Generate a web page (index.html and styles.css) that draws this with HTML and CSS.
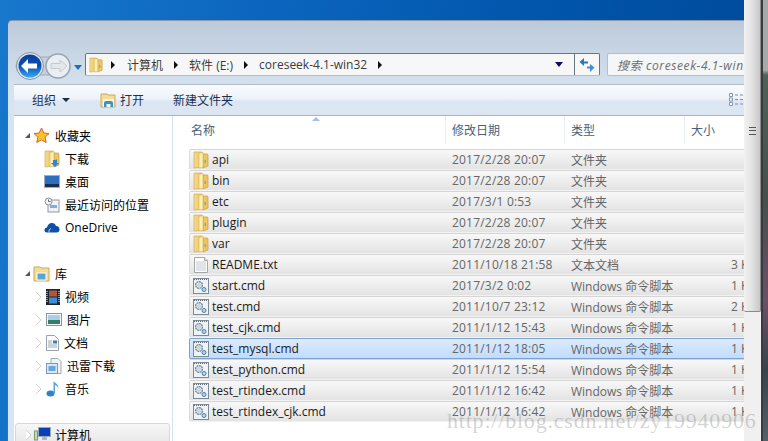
FILE: index.html
```html
<!DOCTYPE html>
<html lang="zh-CN">
<head>
    <meta charset="UTF-8">
    <title>coreseek-4.1-win32</title>
    <link rel="stylesheet" href="styles.css">
</head>
<body>
<svg class="defs" width="0" height="0">
    <defs>
        <linearGradient id="fold" x1="0" y1="0" x2="1" y2="0">
            <stop offset="0" stop-color="#f6dc8c"/>
            <stop offset="1" stop-color="#e8bf55"/>
        </linearGradient>
        <linearGradient id="orb" x1="0" y1="0" x2="0" y2="1">
            <stop offset="0" stop-color="#0d3f98"/>
            <stop offset="0.5" stop-color="#0a4fb4"/>
            <stop offset="1" stop-color="#39a8f2"/>
        </linearGradient>
        <symbol id="folder" viewBox="0 0 16 18">
            <path d="M1 1h8l1 1v14l-9 1z" fill="url(#fold)" stroke="#cfa95c" stroke-width=".7"/>
            <path d="M10 3h4.500l.5 1v11l-5 2z" fill="#eec660" stroke="#c49c4a" stroke-width=".7"/>
            <path d="M6 2.500l4-1v15l-4 .5z" fill="#fdf0b4" stroke="#d7b45c" stroke-width=".6"/>
            <rect x="11.500" y="9" width="1.500" height="3" fill="#8aa5b0"/>
        </symbol>
        <symbol id="txtfile" viewBox="0 0 16 16">
            <path d="M1.500.5h10l3 3v12h-13z" fill="#fdfdfd" stroke="#a6a6a6"/>
            <path d="M11.500.5v3h3" fill="#e8e8e8" stroke="#a6a6a6"/>
            <path d="M3 5h10M3 7h10M3 9h10M3 11h10M3 13h10" stroke="#c4ccd4"/>
        </symbol>
        <symbol id="cmdfile" viewBox="0 0 16 16">
            <rect x=".5" y=".5" width="15" height="15" fill="#eef3f7" stroke="#7d8a94"/>
            <path d="M1 1.500h14" stroke="#5f6a74" stroke-dasharray="1 1"/>
            <circle cx="6" cy="7" r="3.400" fill="#dfe8ee" stroke="#6f8494" stroke-width="1.300" stroke-dasharray="2 .6"/>
            <circle cx="6" cy="7" r="1.200" fill="#fff" stroke="#8fa0ac" stroke-width=".6"/>
            <circle cx="11" cy="11.500" r="2" fill="#b9d3ea" stroke="#4a7eb0"/>
        </symbol>
    </defs>
</svg>

<div class="desktop">
    <div class="window">
        <div class="nav">
            <div class="orbs">
                <svg width="62" height="30" viewBox="0 0 62 30">
                    <rect x="1" y="6" width="54" height="18" rx="9" fill="#c6d0dc" stroke="#9fabb8"/>
                    <circle cx="15" cy="15" r="13.500" fill="#dfe7ef" stroke="#8795a5"/>
                    <circle cx="15" cy="15" r="11.500" fill="url(#orb)"/>
                    <path d="M6 15l7-7v4.500h9v5h-9v4.500z" fill="#fff"/>
                    <circle cx="43" cy="15" r="12" fill="#e9eef3" stroke="#98a3af" stroke-width="1.500"/>
                    <path d="M52 15l-7-6v3.500h-9v5h9v3.500z" fill="#e4e8ec" stroke="#c2c9d0"/>
                </svg>
                <span class="caret-blue"></span>
            </div>
            <div class="address">
                <svg class="addr-icon" width="14" height="18"><use href="#folder"/></svg>
                <span class="crumb-arrow first"></span>
                <span>计算机</span>
                <span class="crumb-arrow"></span>
                <span>软件 (E:)</span>
                <span class="crumb-arrow"></span>
                <span>coreseek-4.1-win32</span>
                <span class="crumb-arrow"></span>
                <span class="addr-drop"></span>
                <span class="refresh">
                    <svg width="16" height="16" viewBox="0 0 16 16">
                        <path d="M5 1v3.500h4v2H5V9L.5 5z" fill="#2f74c0"/>
                        <path d="M11 15v-3.500H8v-2h3V7l4.500 3.500z" fill="#3f8fd8"/>
                    </svg>
                </span>
            </div>
            <div class="search">搜索 coreseek-4.1-win32</div>
        </div>

        <div class="toolbar">
            <span class="tool organize">组织<i class="caret-dark"></i></span>
            <span class="tool open">
                <svg width="17" height="16" viewBox="0 0 17 16">
                    <path d="M1 2h6l1 1h7v12H1z" fill="#f3dc95" stroke="#c9a95c"/>
                    <path d="M3 7h11v8H3z" fill="#fdf6d8"/>
                    <path d="M4 15V11q0-2 2-2h5q2 0 2 2v4h-2.500v-3h-4v3z" fill="#3b8fd0"/>
                </svg>
                打开
            </span>
            <span class="tool">新建文件夹</span>
            <svg class="view-icon" width="15" height="13" viewBox="0 0 15 13">
                <path d="M.5.500h3v3h-3zM.5 5h3v3h-3zM.5 9.500h3v3h-3z" fill="#fff" stroke="#8494a6"/>
                <path d="M6 2h3M11 2h3M6 6.500h3M11 6.500h3M6 11h3M11 11h3" stroke="#7d8da0"/>
            </svg>
        </div>

        <div class="panes">
            <aside class="sidebar">
                <div class="side-row top"><i class="arrow-open"></i>
                    <svg class="ico-big" width="17" height="17" viewBox="0 0 17 17">
                        <path d="M8.500 1l2.300 5 5.200.6-3.900 3.500 1.100 5.400-4.700-2.700-4.700 2.700 1.100-5.400L1 6.600 6.200 6z" fill="#fbc02d" stroke="#d9641e"/>
                    </svg>
                    收藏夹</div>
                <div class="side-row sub">
                    <svg width="16" height="18" viewBox="0 0 16 18"><use href="#folder"/><path d="M9 10h4v3h2l-4 4-4-4h2z" fill="#2a86d8"/></svg>
                    下载</div>
                <div class="side-row sub">
                    <svg width="16" height="13" viewBox="0 0 16 13"><rect x=".5" y=".5" width="15" height="12" fill="#2a6fc0" stroke="#9fb0c0"/><rect x="1" y="9" width="14" height="3" fill="#1c2f4a"/></svg>
                    桌面</div>
                <div class="side-row sub">
                    <svg width="16" height="16" viewBox="0 0 16 16"><rect x="4" y="3" width="11" height="12" fill="#f0f3f5" stroke="#8e9aa5"/><rect x="6" y="8" width="7" height="3" fill="#7fb0d8"/><circle cx="4.500" cy="4.500" r="3.500" fill="#f4f4f4" stroke="#868f98"/><path d="M4.500 2.500v2h2" fill="none" stroke="#667"/></svg>
                    最近访问的位置</div>
                <div class="side-row sub">
                    <svg width="16" height="11" viewBox="0 0 16 11"><path d="M3 10.500Q.5 10.500.5 8T3 5.500Q4 1 8 1q3 0 4 3 3.500 0 3.500 3.500 0 3-3 3z" fill="#0f4fa8"/><path d="M5 10.500q-1-3 2-4" fill="none" stroke="#fff" stroke-width=".7"/></svg>
                    OneDrive</div>

                <div class="side-row group"><i class="arrow-open"></i>
                    <svg class="ico-big" width="17" height="17" viewBox="0 0 17 17"><path d="M1 2h6l1 1h8v13H1z" fill="#f3dc95" stroke="#c9a95c"/><rect x="4" y="8" width="9" height="7" fill="#5aa5d8" stroke="#fff"/></svg>
                    库</div>
                <div class="side-row lib"><i class="arrow-closed"></i>
                    <svg width="14" height="16" viewBox="0 0 14 16"><rect width="14" height="16" fill="#20252c"/><rect x="3" y="1.500" width="8" height="6" fill="#b0563c"/><rect x="3" y="8.500" width="8" height="6" fill="#3a8fd8"/><path d="M1 2v12M13 2v12" stroke="#ddd" stroke-dasharray="1 1" stroke-width="1.200"/></svg>
                    视频</div>
                <div class="side-row lib"><i class="arrow-closed"></i>
                    <svg width="16" height="13" viewBox="0 0 16 13"><rect x=".5" y=".5" width="15" height="12" fill="#f3f5f6" stroke="#8a959f"/><rect x="2" y="2" width="12" height="5" fill="#a9cfe8"/><rect x="2" y="7" width="12" height="4" fill="#357f62"/></svg>
                    图片</div>
                <div class="side-row lib"><i class="arrow-closed"></i>
                    <svg width="13" height="16" viewBox="0 0 13 16"><path d="M.5.500h8l4 4v11H.5z" fill="#fbfbfb" stroke="#97a3ad"/><path d="M2 6h4M2 8h4M2 10h9M2 12h9" stroke="#9aa8b6"/><rect x="7" y="5.500" width="4" height="3" fill="#3f79b0"/></svg>
                    文档</div>
                <div class="side-row lib"><i class="arrow-closed"></i>
                    <svg width="16" height="16" viewBox="0 0 16 16"><path d="M5 .5h7l3 3v12H5z" fill="#f1f4f7" stroke="#9daab6"/><rect x=".5" y="5.500" width="11" height="10" fill="#dbe8f3" stroke="#7c9ab8"/><rect x="2.500" y="8" width="7" height="5" fill="#65a8e0"/></svg>
                    迅雷下载</div>
                <div class="side-row lib"><i class="arrow-closed"></i>
                    <svg width="14" height="16" viewBox="0 0 14 16"><ellipse cx="4.500" cy="12.500" rx="4" ry="3" fill="#2f83cc"/><path d="M7.500 12V.5q5 2.500 5 7-1-3-3.500-3.500V12z" fill="#58a5de"/></svg>
                    音乐</div>

                <div class="side-row computer"><i class="arrow-closed"></i>
                    <svg width="17" height="16" viewBox="0 0 17 16"><rect x=".5" y="4" width="3" height="9" fill="#c5d0d8" stroke="#79a060"/><rect x="4.500" y=".5" width="12" height="9" fill="#0b3fb5" stroke="#9aa8b4"/><rect x="8" y="10" width="5" height="3" fill="#aeb8c0"/></svg>
                    计算机</div>
            </aside>

            <main class="files">
                <div class="sort-mark"></div>
                <div class="headers">
                    <span class="col-name">名称</span>
                    <span class="col-date">修改日期</span>
                    <span class="col-type">类型</span>
                    <span class="col-size">大小</span>
                </div>

                <div class="row"><svg width="16" height="18"><use href="#folder"/></svg><span class="col-name">api</span><span class="col-date">2017/2/28 20:07</span><span class="col-type">文件夹</span><span class="col-size"></span></div>
                <div class="row"><svg width="16" height="18"><use href="#folder"/></svg><span class="col-name">bin</span><span class="col-date">2017/2/28 20:07</span><span class="col-type">文件夹</span><span class="col-size"></span></div>
                <div class="row"><svg width="16" height="18"><use href="#folder"/></svg><span class="col-name">etc</span><span class="col-date">2017/3/1 0:53</span><span class="col-type">文件夹</span><span class="col-size"></span></div>
                <div class="row"><svg width="16" height="18"><use href="#folder"/></svg><span class="col-name">plugin</span><span class="col-date">2017/2/28 20:07</span><span class="col-type">文件夹</span><span class="col-size"></span></div>
                <div class="row"><svg width="16" height="18"><use href="#folder"/></svg><span class="col-name">var</span><span class="col-date">2017/2/28 20:07</span><span class="col-type">文件夹</span><span class="col-size"></span></div>
                <div class="row"><svg width="16" height="16"><use href="#txtfile"/></svg><span class="col-name">README.txt</span><span class="col-date">2011/10/18 21:58</span><span class="col-type">文本文档</span><span class="col-size">3 KB</span></div>
                <div class="row"><svg width="16" height="16"><use href="#cmdfile"/></svg><span class="col-name">start.cmd</span><span class="col-date">2017/3/2 0:02</span><span class="col-type">Windows 命令脚本</span><span class="col-size">1 KB</span></div>
                <div class="row"><svg width="16" height="16"><use href="#cmdfile"/></svg><span class="col-name">test.cmd</span><span class="col-date">2011/10/7 23:12</span><span class="col-type">Windows 命令脚本</span><span class="col-size">2 KB</span></div>
                <div class="row"><svg width="16" height="16"><use href="#cmdfile"/></svg><span class="col-name">test_cjk.cmd</span><span class="col-date">2011/1/12 15:43</span><span class="col-type">Windows 命令脚本</span><span class="col-size">1 KB</span></div>
                <div class="row selected"><svg width="16" height="16"><use href="#cmdfile"/></svg><span class="col-name">test_mysql.cmd</span><span class="col-date">2011/1/12 18:05</span><span class="col-type">Windows 命令脚本</span><span class="col-size">1 KB</span></div>
                <div class="row"><svg width="16" height="16"><use href="#cmdfile"/></svg><span class="col-name">test_python.cmd</span><span class="col-date">2011/1/12 15:54</span><span class="col-type">Windows 命令脚本</span><span class="col-size">1 KB</span></div>
                <div class="row"><svg width="16" height="16"><use href="#cmdfile"/></svg><span class="col-name">test_rtindex.cmd</span><span class="col-date">2011/1/12 16:42</span><span class="col-type">Windows 命令脚本</span><span class="col-size">1 KB</span></div>
                <div class="row"><svg width="16" height="16"><use href="#cmdfile"/></svg><span class="col-name">test_rtindex_cjk.cmd</span><span class="col-date">2011/1/12 16:42</span><span class="col-type">Windows 命令脚本</span><span class="col-size">1 KB</span></div>
            </main>
        </div>
    </div>

    <div class="scrollbar">
        <div class="thumb"><span class="grip"></span></div>
    </div>
    <div class="edge"></div>
</div>

<div class="watermark">http://blog.csdn.net/zy19940906</div>
</body>
</html>
```

FILE: styles.css
```css
* {
    box-sizing: border-box;
}

html, body {
    margin: 0;
    height: 441px;
    overflow: hidden;
}

body {
    font-family: "Open Sans", "Noto Sans CJK SC", sans-serif;
    font-size: 12px;
    color: #1e2b3a;
}

.defs {
    position: absolute;
}

.desktop {
    display: flex;
    height: 441px;
    overflow: hidden;
    background: linear-gradient(100deg, #1878cc 0%, #0c66bf 30%, #0053a8 70%, #004796 100%);
}

/* ventana */
.window {
    width: 737px;
    margin: 20px 0 0 7px;
    padding: 0 0 0 6px;
    display: flex;
    flex-direction: column;
    border-top: 1px solid #8d99a6;
    border-left: 1px solid #4f6a84;
    border-top-left-radius: 5px;
    background: linear-gradient(#bdcad9 0, #d6e3f1 70px, #d8e5f4 100%);
}

.nav {
    height: 63px;
    margin-left: -6px;
    padding: 32px 0 0 7px;
    display: flex;
    align-items: flex-start;
}

.orbs {
    width: 69px;
    height: 30px;
    margin-top: -2px;
    display: flex;
    align-items: center;
}

.caret-blue {
    margin-left: -3px;
    margin-top: 2px;
    border: 4.500px solid transparent;
    border-top: 5px solid #1f6fb5;
    border-bottom: 0;
}

.address {
    width: 515px;
    height: 23px;
    margin-left: 1px;
    display: flex;
    align-items: center;
    border: 1px solid #6b7580;
    border-bottom-color: #b4bcc6;
    border-radius: 2px;
    background: #f7f7f7;
    color: #3c3c3c;
}

.addr-icon {
    margin-left: 3px;
}

.crumb-arrow {
    width: 0;
    border-left: 4px solid #111;
    border-top: 4px solid transparent;
    border-bottom: 4px solid transparent;
    margin: 0 11px;
}

.crumb-arrow.first {
    margin-left: 8px;
    margin-right: 12px;
}

.addr-drop {
    margin-left: auto;
    margin-right: 11px;
    border: 4px solid transparent;
    border-top: 5px solid #0d0d5c;
    border-bottom: 0;
}

.refresh {
    width: 25px;
    height: 21px;
    display: flex;
    align-items: center;
    justify-content: center;
    border-left: 1px solid #6b7580;
}

.search {
    width: 137px;
    height: 23px;
    margin-left: 7px;
    padding: 2px 0 0 9px;
    white-space: nowrap;
    overflow: hidden;
    border: 1px solid #b4bfcc;
    border-right: 0;
    border-radius: 2px 0 0 2px;
    background: #f5f6f7;
    color: #6d6d6d;
    font-style: italic;
    letter-spacing: .6px;
}

/* barra de herramientas */
.toolbar {
    height: 32px;
    display: flex;
    align-items: center;
    border-top: 1px solid #aebccb;
    border-bottom: 1px solid #a4b5c8;
    background: linear-gradient(#fafcfe 0, #edf2f9 14px, #dde7f3 16px, #dce6f2 100%);
    color: #1e3250;
}

.tool {
    display: flex;
    align-items: center;
    gap: 3px;
}

.organize {
    margin-left: 18px;
    gap: 6px;
}

.open {
    margin-left: 30px;
}

.open + .tool {
    margin-left: 29px;
}

.caret-dark {
    border: 4px solid transparent;
    border-top: 4px solid #1c2c44;
    border-bottom: 0;
}

.view-icon {
    margin-left: auto;
    margin-top: -1px;
}

/* paneles */
.panes {
    flex: 1;
    display: flex;
    min-height: 0;
    background: #fff;
}

.sidebar {
    width: 159px;
    flex: none;
    padding-top: 8px;
    border-right: 1px solid #d3e1f0;
    color: #000;
}

.side-row {
    height: 23px;
    display: flex;
    align-items: center;
    white-space: nowrap;
}

.side-row svg {
    flex: none;
    margin-right: 5px;
}

.side-row.top {
    padding-left: 11px;
}

.side-row.sub {
    padding-left: 30px;
}

.side-row.group {
    margin-top: 23px;
    padding-left: 11px;
}

.side-row.lib {
    padding-left: 22px;
}

.side-row.computer {
    margin: 23px 2px 0 1px;
    padding-left: 10px;
    border: 1px solid #d6d9dc;
    border-radius: 3px;
    background: linear-gradient(#f7f7f7, #e6e6e6);
}

.side-row.computer .arrow-closed {
    margin-right: 3px;
}

.side-row.computer svg {
    margin-right: 4px;
}

.ico-big {
    margin-left: 3px;
}

.arrow-open {
    width: 0;
    border-bottom: 5px solid #555;
    border-left: 5px solid transparent;
}

.arrow-closed {
    width: 0;
    margin-right: 5px;
    border-left: 5px solid #fff;
    border-top: 5px solid transparent;
    border-bottom: 5px solid transparent;
    filter: drop-shadow(0 0 .6px #555);
}

.files {
    flex: 1;
    min-width: 0;
    padding-left: 16px;
    position: relative;
    overflow: hidden;
    color: #666;
}

.sort-mark {
    position: absolute;
    left: 139px;
    top: 1px;
    border: 4px solid transparent;
    border-top: 0;
    border-bottom: 4px solid #9cc4ea;
}

.headers,
.row {
    display: flex;
    align-items: center;
}

.headers {
    height: 33px;
    padding-bottom: 5px;
    color: #4c607a;
}

.headers span {
    align-self: stretch;
    display: flex;
    align-items: center;
}

.headers .col-name {
    width: 256px;
    padding-left: 2px;
}

.headers .col-date,
.headers .col-type {
    width: 119px;
    padding-left: 6px;
    border-left: 1px solid #e9eef4;
}

.headers .col-type {
    width: 120px;
}

.headers .col-size {
    padding-left: 6px;
    border-left: 1px solid #e9eef4;
    flex: 1;
}

.row {
    height: 21px;
    padding-left: 3px;
    border-top: 1px solid #d5d5d5;
    border-bottom: 1px solid #f2f2f2;
    border-left: 1px solid #dcdcdc;
    border-radius: 2px 0 0 2px;
    background: linear-gradient(#f8f8f8, #e3e3e3);
    white-space: nowrap;
}

.row svg,
.row span {
    flex: none;
}

.row svg {
    width: 16px;
}

.row .col-name {
    width: 237px;
    padding-left: 3px;
    color: #1b1b1b;
}

.row .col-date {
    width: 119px;
    padding-left: 6px;
    letter-spacing: .2px;
}

.row .col-type {
    width: 120px;
    padding-left: 6px;
}

.row .col-size {
    padding-left: 46px;
}

.row.selected {
    border-top-color: #7da2ce;
    border-left-color: #7da2ce;
    border-bottom-color: #7da2ce;
    background: linear-gradient(#dcebfc, #c1dcfc);
}

/* barra lateral */
.scrollbar {
    width: 17px;
    flex: none;
    background: #f0f0f0;
}

.thumb {
    height: 312px;
    display: flex;
    align-items: center;
    justify-content: center;
    padding-bottom: 50px;
    border-right: 1px solid #8b8b8b;
    border-bottom: 1px solid #8b8b8b;
    border-radius: 0 0 2px 2px;
    background: linear-gradient(90deg, #f2f2f2, #e2e2e2 50%, #c8c8c8);
}

.grip {
    width: 7px;
    height: 8px;
    border-top: 1px solid #555;
    border-bottom: 1px solid #555;
    background: linear-gradient(#555, #555) center / 100% 1px no-repeat;
}

.edge {
    flex: 1;
    border-left: 2px solid #383c40;
    background: linear-gradient(#a8aaaa 0, #a8aaaa 70px, #4d6258 75px, #46504a 200px, #6d4f66 300px, #38434e 370px, #54606a 441px);
}

.watermark {
    position: absolute;
    left: 447px;
    top: 408px;
    font-family: "Liberation Serif", serif;
    font-size: 22px;
    letter-spacing: .8px;
    color: rgba(120, 120, 120, .32);
    white-space: nowrap;
}
```
